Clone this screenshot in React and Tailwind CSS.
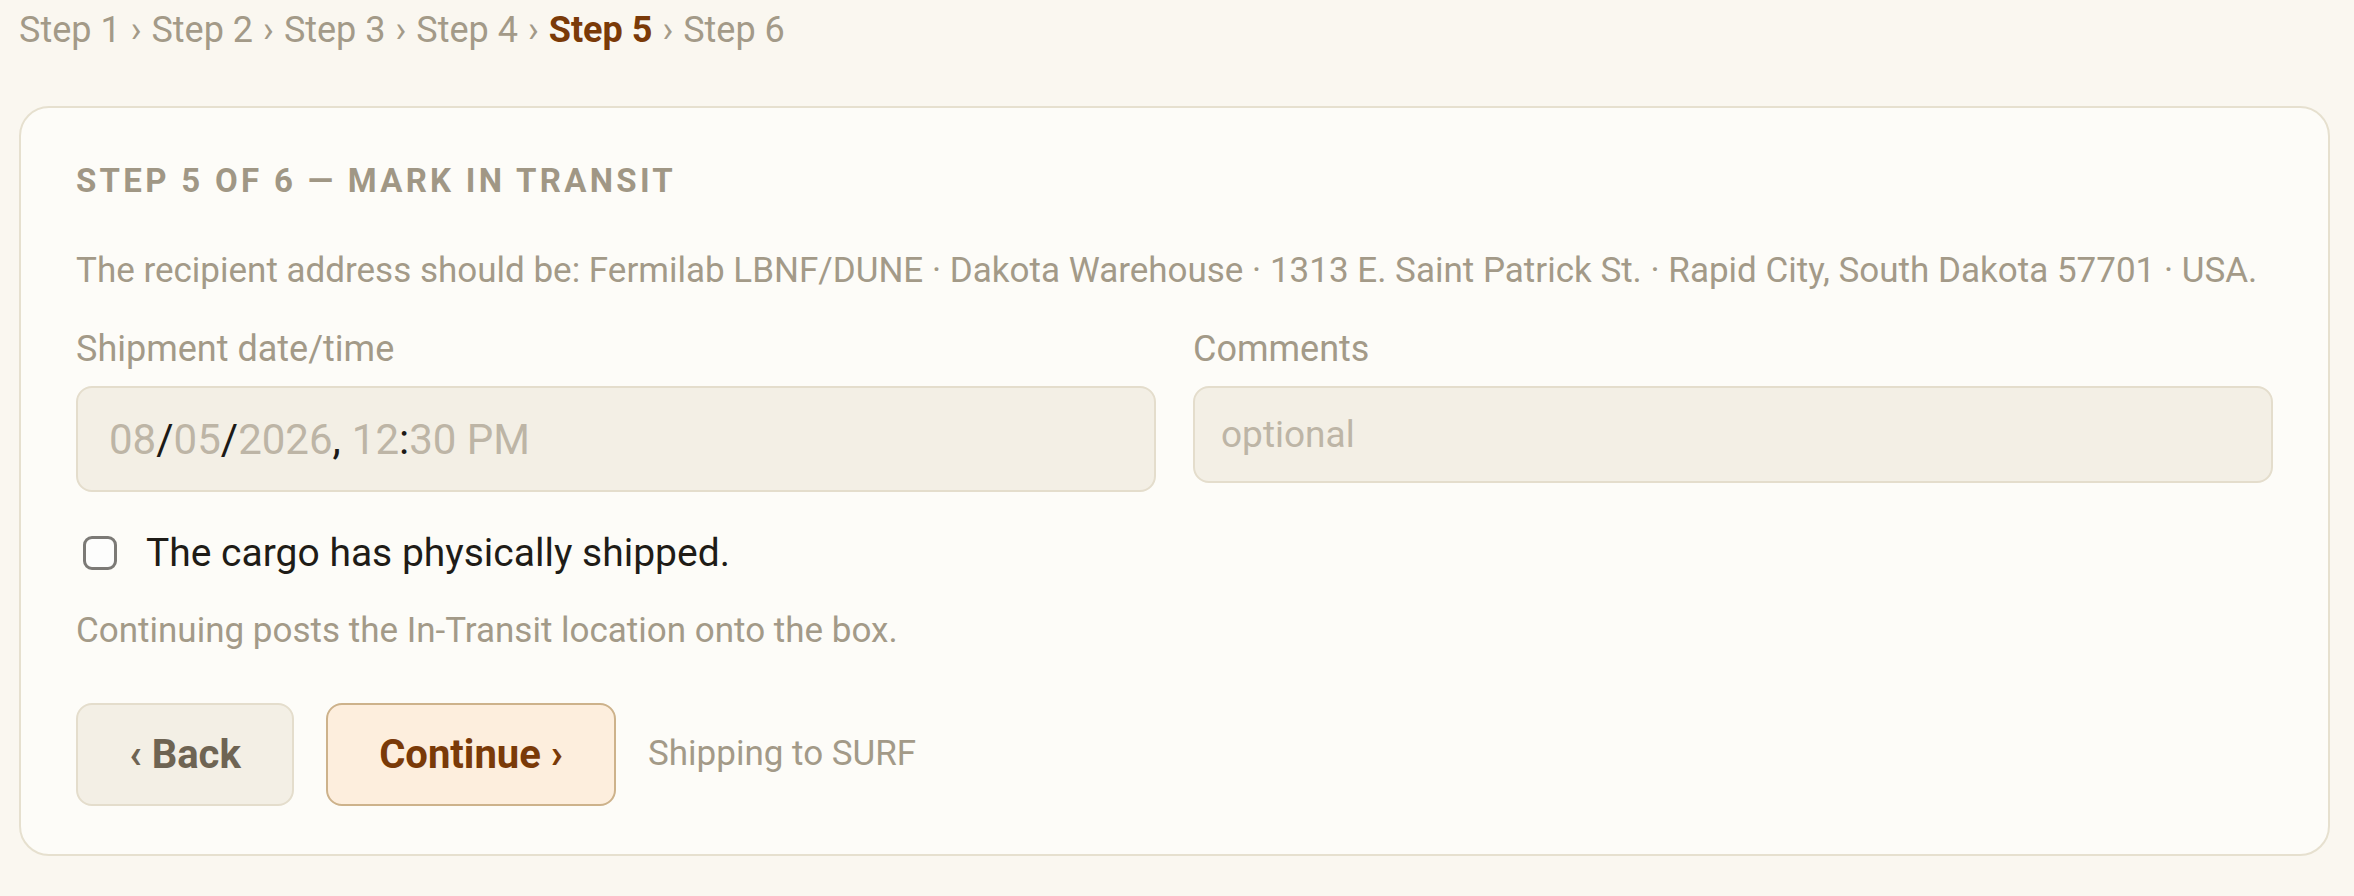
const steps = ['Step 1', 'Step 2', 'Step 3', 'Step 4', 'Step 5', 'Step 6']

function Breadcrumb({ current }) {
  return (
    <nav className="flex items-center text-[36px] leading-[40px] text-[#a39a88]">
      {steps.map((s, i) => (
        <span key={s} className="flex items-center">
          {i > 0 && <span className="px-[10px]">›</span>}
          <span className={i + 1 === current ? 'font-bold text-[#7a3a08]' : ''}>{s}</span>
        </span>
      ))}
    </nav>
  )
}

function DateField() {
  const dim = 'text-[#bdb5a6]'
  const dark = 'text-[#1c1a17]'
  return (
    <div className="flex h-[106px] items-center rounded-[16px] border-2 border-[#e4ddcc] bg-[#f3efe5] px-[31px] text-[42px]">
      <span className={dim}>08</span>
      <span className={dark}>/</span>
      <span className={dim}>05</span>
      <span className={dark}>/</span>
      <span className={dim}>2026</span>
      <span className={dark}>,</span>
      <span className="w-[11px]" />
      <span className={dim}>12</span>
      <span className={dark}>:</span>
      <span className={dim}>30 PM</span>
    </div>
  )
}

export default function App() {
  return (
    <div className="min-h-screen bg-[#faf7f0] px-[19px] pt-[10px] pb-[40px] font-['Roboto',sans-serif]">
      <Breadcrumb current={5} />

      <div className="mt-[56px] w-[2311px] rounded-[30px] border-2 border-[#e6e0cf] bg-[#fdfcf8] px-[55px] pt-[55px] pb-[48px]">
        <h2 className="text-[33px] leading-[36px] font-bold tracking-[0.1em] text-[#a09785]">
          STEP 5 OF 6 — MARK IN TRANSIT
        </h2>

        <p className="mt-[52px] text-[35px] leading-[40px] text-[#a39a88]">
          The recipient address should be: Fermilab LBNF/DUNE · Dakota Warehouse · 1313 E. Saint Patrick St. · Rapid City, South Dakota 57701 · USA.
        </p>

        <div className="mt-[36px] grid grid-cols-2 gap-x-[37px]">
          <div className="flex flex-col gap-[15px]">
            <label className="text-[36px] leading-[44px] text-[#a39a88]">Shipment date/time</label>
            <DateField />
          </div>
          <div className="flex flex-col gap-[15px]">
            <label className="text-[36px] leading-[44px] text-[#a39a88]">Comments</label>
            <div className="flex h-[97px] items-center rounded-[16px] border-2 border-[#e4ddcc] bg-[#f3efe5] px-[26px] text-[37px] text-[#bdb5a6]">
              optional
            </div>
          </div>
        </div>

        <label className="mt-[39px] flex h-[44px] items-center">
          <span className="ml-[7px] h-[34px] w-[34px] rounded-[9px] border-[3px] border-[#7c7a76] bg-[#fdfdfc]" />
          <span className="ml-[29px] text-[39px] text-[#1f1c17]">The cargo has physically shipped.</span>
        </label>

        <p className="mt-[36px] text-[35px] leading-[40px] text-[#a39a88]">
          Continuing posts the In-Transit location onto the box.
        </p>

        <div className="mt-[52px] flex items-center gap-[32px]">
          <button className="h-[103px] w-[218px] rounded-[16px] border-2 border-[#e4ddcc] bg-[#f3efe5] text-[40px] font-bold text-[#6e6453]">
            ‹ Back
          </button>
          <button className="h-[103px] w-[290px] rounded-[16px] border-2 border-[#cdb28b] bg-[#fdeedd] text-[40px] font-bold text-[#7a3a08]">
            Continue ›
          </button>
          <span className="text-[35px] text-[#a39a88]">Shipping to SURF</span>
        </div>
      </div>
    </div>
  )
}
